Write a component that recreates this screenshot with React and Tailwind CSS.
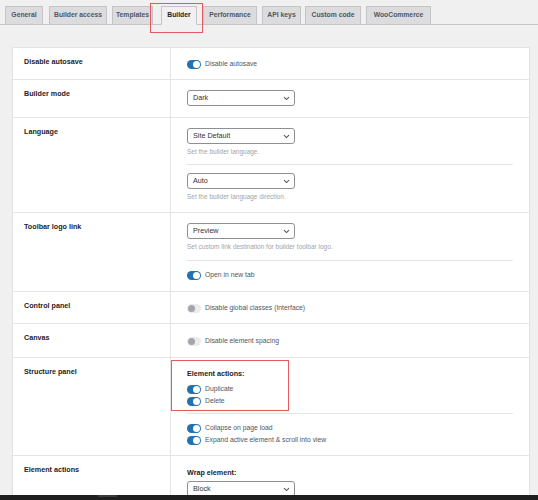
import React from "react";

const FONT = { fontFamily: '"Liberation Sans", Arial, sans-serif' };

function Toggle({ on = true, label, className = "" }) {
  return (
    <div className={"flex items-center h-[10px] " + className}>
      {on ? (
        <div className="w-[14px] h-[9px] rounded-full bg-[#2271b1] flex items-center justify-end pr-[1px] shrink-0">
          <div className="w-[7px] h-[7px] rounded-full bg-white" />
        </div>
      ) : (
        <div className="w-[14px] h-[9px] rounded-full bg-[#ebebeb] flex items-center justify-start pl-[1px] shrink-0">
          <div className="w-[7px] h-[7px] rounded-full bg-[#a2a6ab]" />
        </div>
      )}
      <span className="ml-[4px] text-[6.8px] leading-[10px] text-[#50575e] whitespace-nowrap">{label}</span>
    </div>
  );
}

function Select({ value, className = "" }) {
  return (
    <div
      className={
        "w-[108px] h-[16px] border border-[#8c8f94] rounded-[3px] bg-white flex items-center justify-between pl-[5px] pr-[4px] " +
        className
      }
    >
      <span className="text-[7.2px] leading-[10px] text-[#2c3338]">{value}</span>
      <svg width="7" height="5" viewBox="0 0 7 5">
        <path d="M1 1.2 L3.5 3.6 L6 1.2" fill="none" stroke="#50575e" strokeWidth="1.1" />
      </svg>
    </div>
  );
}

function Help({ children, className = "" }) {
  return <div className={"text-[6.5px] leading-[10px] text-[#a0a5aa] " + className}>{children}</div>;
}

function Divider({ className = "" }) {
  return <div className={"h-px bg-[#e6e6e6] " + className} />;
}

function Row({ label, h, children, last = false, contentClass = "" }) {
  return (
    <div className={"flex " + (last ? "" : "border-b border-[#e4e4e4]")} style={h ? { height: h } : undefined}>
      <div className="w-[157px] shrink-0 pl-[11px] pt-[9px]">
        <div className="text-[7.2px] leading-[10px] font-bold text-[#1d2327]">{label}</div>
      </div>
      <div className={"flex-1 border-l border-[#e4e4e4] pl-[16px] pr-[16px] relative " + contentClass}>{children}</div>
    </div>
  );
}

const tabs = [
  { t: "General", cls: "w-[38px]" },
  { t: "Builder access", cls: "w-[58px] ml-[6px]" },
  { t: "Templates", cls: "w-[41px] ml-[5px]" },
  { t: "Builder", cls: "w-[36px] ml-[8px]", active: true },
  { t: "Performance", cls: "w-[54px] ml-[6px]" },
  { t: "API keys", cls: "w-[39px] ml-[5px]" },
  { t: "Custom code", cls: "w-[56px] ml-[4px]" },
  { t: "WooCommerce", cls: "w-[65px] ml-[5px]" },
];

export default function App() {
  return (
    <div className="w-[538px] h-[500px] bg-[#f0f0f1] overflow-hidden flex flex-col relative" style={FONT}>
      <div className="flex-1 overflow-hidden">
        {/* Tabs */}
        <div className="flex items-end pl-[5px] border-b border-[#c3c4c7] h-[25px]">
          {tabs.map(({ t, cls, active }) => (
            <div
              key={t}
              className={
                "h-[19px] flex items-center justify-center border border-[#c3c4c7] text-[6.8px] font-bold whitespace-nowrap -mb-px " +
                cls +
                " " +
                (active ? "bg-[#f0f0f1] text-[#1d2327] border-b-[#f0f0f1]" : "bg-[#dcdcde] text-[#50575e]")
              }
            >
              {t}
            </div>
          ))}
        </div>

        {/* Panel */}
        <div className="ml-[12px] mt-[22px] w-[518px] bg-white border border-[#e2e2e2]">
          <Row label="Disable autosave" h={32}>
            <Toggle label="Disable autosave" className="mt-[11px]" />
          </Row>
          <Row label="Builder mode" h={38}>
            <Select value="Dark" className="mt-[10px]" />
          </Row>
          <Row label="Language" h={95}>
            <Select value="Site Default" className="mt-[10px]" />
            <Help className="mt-[3px]">Set the builder language.</Help>
            <Divider className="mt-[7px]" />
            <Select value="Auto" className="mt-[8px]" />
            <Help className="mt-[3px]">Set the builder language direction.</Help>
          </Row>
          <Row label="Toolbar logo link" h={79}>
            <Select value="Preview" className="mt-[10px]" />
            <Help className="mt-[3px]">Set custom link destination for builder toolbar logo.</Help>
            <Divider className="mt-[8px]" />
            <Toggle label="Open in new tab" className="mt-[9px]" />
          </Row>
          <Row label="Control panel" h={32}>
            <Toggle on={false} label="Disable global classes (Interface)" className="mt-[11px]" />
          </Row>
          <Row label="Canvas" h={34}>
            <Toggle on={false} label="Disable element spacing" className="mt-[12px]" />
          </Row>
          <Row label="Structure panel" h={98}>
            <div className="absolute left-0 top-[2px] w-[118px] h-[51px] border border-[#e5585e] pointer-events-none" />
            <div className="mt-[11px] text-[7.2px] leading-[10px] font-bold text-[#1d2327]">Element actions:</div>
            <Toggle label="Duplicate" className="mt-[5px]" />
            <Toggle label="Delete" className="mt-[2px]" />
            <Divider className="mt-[7px]" />
            <Toggle label="Collapse on page load" className="mt-[9px]" />
            <Toggle label="Expand active element & scroll into view" className="mt-[2px]" />
          </Row>
          <Row label="Element actions" last h={60}>
            <div className="mt-[12px] text-[7.2px] leading-[10px] font-bold text-[#1d2327]">Wrap element:</div>
            <Select value="Block" className="mt-[3px]" />
          </Row>
        </div>
      </div>

      {/* red highlight around Builder tab */}
      <div className="absolute left-[150px] top-[3px] w-[53px] h-[30px] border border-[#e5585e] pointer-events-none" />

      {/* bottom dark strip */}
      <div className="h-[5px] bg-[#1f1f1f] flex shrink-0">
        <div className="ml-[98px] w-[19px] h-[2px] bg-[#3a3a3a]" />
      </div>
    </div>
  );
}
